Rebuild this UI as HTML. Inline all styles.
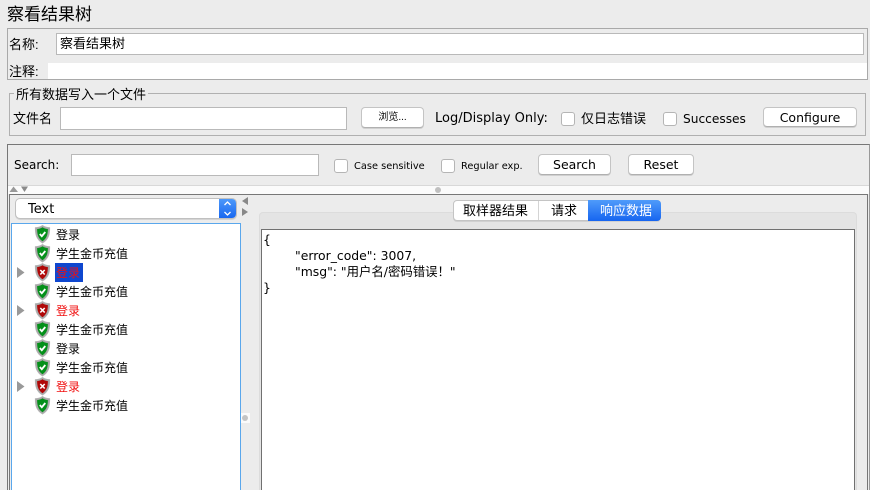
<!DOCTYPE html>
<html><head><meta charset="utf-8">
<style>
html,body{margin:0;padding:0;width:870px;height:490px;overflow:hidden;background:#ececec}
body{position:relative;font-family:"DejaVu Sans","Noto Sans CJK SC",sans-serif;color:#000}
div,span.a{position:absolute;box-sizing:border-box}
.t{position:absolute;white-space:nowrap;line-height:16px;height:16px}
.cn{font-family:"Liberation Sans","Noto Sans CJK SC",sans-serif}
.in{background:#fff;border:1px solid #b9b9b9}
.btn{background:#fff;border:1px solid #c4c4c4;border-bottom-color:#b0b0b0;border-radius:4px;text-align:center;font-size:12px;box-shadow:0 1px 0 #d0d0d0;white-space:nowrap}
.cb{background:#fff;border:1px solid #b5b5b5;border-radius:3px;width:14px;height:14px}
.row{position:absolute;left:56px;font-size:12px;line-height:16px;height:16px;white-space:nowrap;font-family:"Liberation Sans","Noto Sans CJK SC",sans-serif}
.r{color:#f01010}
.j{font-family:"DejaVu Sans","Noto Sans CJK SC",sans-serif;font-size:12.400px}
svg{position:absolute;overflow:visible}
</style></head><body>
<svg width="0" height="0" style="position:absolute"><defs>
<path id="so" d="M7.500 -.5C5.500 1 3 1.600 .3 1.700 .2 8.500 1.500 13.500 7.500 17 13.500 13.500 14.800 8.500 14.700 1.700 12 1.600 9.500 1 7.500 -.5Z" fill="#a8a8a8" stroke="#b4b4b4" stroke-width=".8"/>
<path id="si" d="M7.500 1.300C6 2.400 4.200 3 2.100 3.100 2.200 8.500 3.300 12.400 7.500 15.200 11.700 12.400 12.800 8.500 12.900 3.100 10.800 3 9 2.400 7.500 1.300Z"/>
<g id="ok"><use href="#so"/><use href="#si" fill="#04901a"/><path d="M4.800 8 6.800 10.200 10.300 6" fill="none" stroke="#fff" stroke-width="1.800"/></g>
<g id="er"><use href="#so"/><use href="#si" fill="#b00808"/><path d="M5.300 6 9.700 10.500M9.700 6 5.300 10.500" fill="none" stroke="#fff" stroke-width="1.600"/></g>
</defs></svg>

<div class="t cn" style="left:7px;top:6px;font-size:17px;line-height:18px;height:18px">察看结果树</div>

<div style="left:7px;top:28px;width:861px;height:52px;border:1px solid #a9a9a9"></div>
<div class="t cn" style="left:9px;top:37px;font-size:13px">名称:</div>
<div class="in" style="left:56px;top:33px;width:808px;height:22px"></div>
<div class="t cn" style="left:60px;top:36px;font-size:13px">察看结果树</div>
<div class="t cn" style="left:9px;top:64px;font-size:13px">注释:</div>
<div style="left:48px;top:63px;width:819px;height:16px;background:#fff"></div>

<div style="left:9px;top:93px;width:857px;height:43px;border:1px solid #b0b0b0"></div>
<div class="t cn" style="left:14px;top:87px;font-size:13px;background:#ececec;padding:0 2px">所有数据写入一个文件</div>
<div class="t cn" style="left:13px;top:111px;font-size:13px">文件名</div>
<div class="in" style="left:60px;top:107px;width:287px;height:23px"></div>
<div class="btn cn" style="left:361px;top:107px;width:63px;height:21px;font-size:10px;line-height:19px">浏览...</div>
<div class="t" style="left:435px;top:111px;font-size:13px">Log/Display Only:</div>
<div class="cb" style="left:561px;top:112px"></div>
<div class="t cn" style="left:581px;top:111px;font-size:13px">仅日志错误</div>
<div class="cb" style="left:663px;top:112px"></div>
<div class="t" style="left:683px;top:111px;font-size:12.200px">Successes</div>
<div class="btn" style="left:763px;top:107px;width:94px;height:20px;line-height:19px;font-size:12.500px">Configure</div>

<div style="left:7px;top:144px;width:863px;height:346px;border:1px solid #777;border-right:1px solid #999;border-bottom:0"></div>
<div class="t" style="left:14px;top:157px;font-size:12px">Search:</div>
<div class="in" style="left:71px;top:154px;width:248px;height:22px"></div>
<div class="cb" style="left:334px;top:159px"></div>
<div class="t" style="left:354px;top:159px;font-size:9.800px">Case sensitive</div>
<div class="cb" style="left:441px;top:159px"></div>
<div class="t" style="left:461px;top:159px;font-size:9.800px">Regular exp.</div>
<div class="btn" style="left:538px;top:154px;width:73px;height:21px;line-height:19px;font-size:12.500px">Search</div>
<div class="btn" style="left:628px;top:154px;width:66px;height:21px;line-height:19px;font-size:12.500px">Reset</div>

<div style="left:8px;top:185px;width:861px;height:9px;background:#fbfbfb;border-top:1px solid #d8d8d8"></div>
<svg style="left:0;top:0" width="870" height="490">
<path d="M9.500 192 13.500 186.500 18 192Z" fill="#999"/><path d="M21 186.500 28 186.500 24.500 192Z" fill="#8a8a8a"/>
<circle cx="438" cy="190" r="3" fill="#c0c0c0"/>
</svg>
<div style="left:9px;top:194px;width:859px;height:296px;border:1px solid #777;border-bottom:0;background:#ececec"></div>

<div style="left:15px;top:198px;width:222px;height:21px;background:#fff;border:1px solid #c0c0c0;border-radius:5px;overflow:hidden;box-shadow:0 1px 0 #d4d4d4">
<div style="right:-1px;top:-1px;width:18px;height:21px;background:linear-gradient(#4f9bfa,#1665f0)"></div></div>
<svg style="left:0;top:0" width="870" height="490">
<path d="M224.500 205 227.500 202 230.500 205M224.500 212 227.500 215 230.500 212" fill="none" stroke="#fff" stroke-width="1.300"/>
<path d="M248 197 242 201 248 205Z" fill="#888"/><path d="M242 208 248 212 242 216Z" fill="#888"/>
</svg>
<div class="t" style="left:28px;top:202px;font-size:13px">Text</div>

<div style="left:11px;top:223px;width:230px;height:267px;background:#fff;border:1px solid #5aa7ec;border-bottom:0"></div>
<div style="left:241px;top:413px;width:9px;height:10px;background:#fbfbfb"></div>
<div style="left:242px;top:415px;width:6px;height:6px;border-radius:50%;background:#c4c4c4"></div>

<div style="left:55px;top:263px;width:28px;height:19px;background:#0f47cf"></div>
<svg style="left:0;top:0" width="870" height="490">
<use href="#ok" x="35" y="226"/><use href="#ok" x="35" y="245"/><use href="#er" x="35" y="264"/>
<use href="#ok" x="35" y="283"/><use href="#er" x="35" y="302"/><use href="#ok" x="35" y="321"/>
<use href="#ok" x="35" y="340"/><use href="#ok" x="35" y="359"/><use href="#er" x="35" y="378"/>
<use href="#ok" x="35" y="397"/>
<path d="M17 267 24.500 272.500 17 278ZM17 305 24.500 310.500 17 316ZM17 381 24.500 386.500 17 392Z" fill="#999"/>
</svg>
<div class="row" style="top:227px">登录</div>
<div class="row" style="top:246px">学生金币充值</div>
<div class="row r" style="top:265px">登录</div>
<div class="row" style="top:284px">学生金币充值</div>
<div class="row r" style="top:303px">登录</div>
<div class="row" style="top:322px">学生金币充值</div>
<div class="row" style="top:341px">登录</div>
<div class="row" style="top:360px">学生金币充值</div>
<div class="row r" style="top:379px">登录</div>
<div class="row" style="top:398px">学生金币充值</div>

<div style="left:259px;top:212px;width:598px;height:278px;background:#e4e4e4;border:1px solid #dcdcdc;border-bottom:0;border-radius:4px 4px 0 0"></div>
<div style="left:261px;top:229px;width:594px;height:261px;background:#fff;border:1px solid #707070;border-bottom:0"></div>
<div style="left:453px;top:200px;width:208px;height:21px;background:#fff;border:1px solid #c4c4c4;border-radius:4px;box-shadow:0 1px 0 #d0d0d0"></div>
<div style="left:538px;top:201px;width:1px;height:19px;background:#d4d4d4"></div>
<div style="left:588px;top:200px;width:73px;height:21px;background:linear-gradient(#4f9bfa,#1665f0);border-radius:0 4px 4px 0"></div>
<div class="t cn" style="left:463px;top:203px;font-size:13px">取样器结果</div>
<div class="t cn" style="left:551px;top:203px;font-size:13px">请求</div>
<div class="t cn" style="left:600px;top:203px;font-size:13px;color:#fff">响应数据</div>

<div class="t j" style="left:263px;top:232px">{</div>
<div class="t j" style="left:295px;top:248px">"error_code": 3007,</div>
<div class="t j" style="left:295px;top:264px">"msg": "用户名/密码错误！"</div>
<div class="t j" style="left:263px;top:280px">}</div>
</body></html>
